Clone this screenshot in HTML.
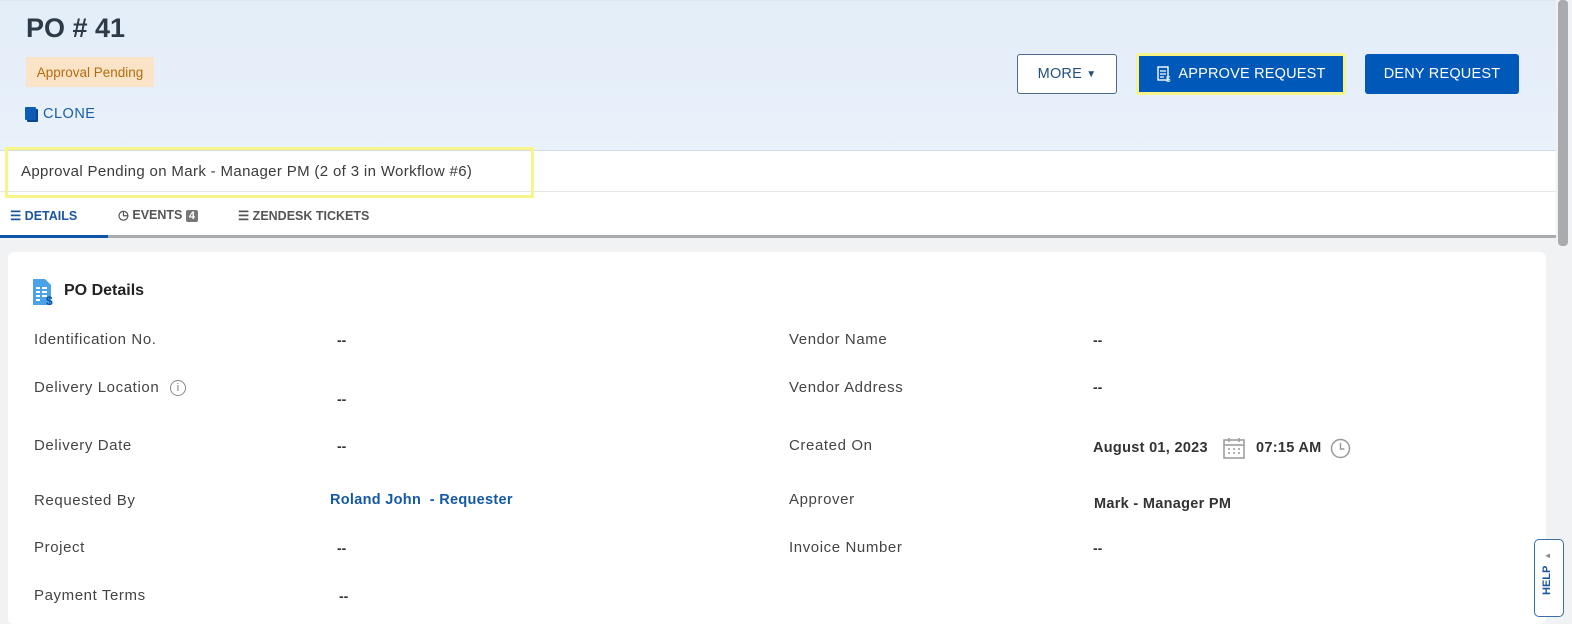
<!DOCTYPE html>
<html><head><meta charset="utf-8"><style>
*{margin:0;padding:0;box-sizing:border-box}
body{width:1572px;height:624px;overflow:hidden;background:#f1f2f4;font-family:"Liberation Sans",sans-serif;position:relative;color:#333}
.hdr{position:absolute;left:0;top:0;width:1556px;height:150px;background:linear-gradient(180deg,#e3edf8,#e9f1fa);border-top:1px solid #dfe5ee}
.abs{position:absolute}
.lbl{position:absolute;left:34px;font-size:15px;color:#444;letter-spacing:.6px;top:0}
.lbl2{position:absolute;left:789px;font-size:15px;color:#444;letter-spacing:.6px}
.val{position:absolute;font-size:14px;font-weight:bold;color:#333}
.btn{position:absolute;top:54px;height:40px;border-radius:3px;font-size:14.5px;display:flex;align-items:center;justify-content:center;letter-spacing:.2px}
</style></head><body>
<div class="hdr"></div>
<div class="abs" style="left:26px;top:13px;font-size:27px;font-weight:bold;color:#2f3a48">PO # 41</div>
<div class="abs" style="left:26px;top:57px;width:128px;height:30px;background:#fbe3c8;color:#b46d0c;font-size:13.5px;line-height:31px;text-align:center">Approval Pending</div>
<div class="abs" style="left:25px;top:107px;width:11px;height:13px;background:#0d5bb5;border-radius:1px;box-shadow:2px 2px 0 #0a4590"></div>
<div class="abs" style="left:43px;top:106px;font-size:14.5px;color:#1b5ea8;letter-spacing:.5px">CLONE</div>
<div class="btn" style="left:1017px;width:100px;background:#fff;border:1px solid #4b6a8c;color:#24507e">MORE&nbsp;<span style="font-size:10px">▼</span></div>
<div class="btn" style="left:1136px;width:210px;background:#0058b8;border:3px solid #f7f58a;color:#fff;top:53px;height:42px"><svg width="16" height="16" viewBox="0 0 16 16" style="margin-right:6px"><rect x="2" y="1" width="10" height="13" fill="none" stroke="#fff" stroke-width="1.4"/><path d="M4 5h6M4 8h6M4 11h4" stroke="#fff" stroke-width="1.2"/><text x="10" y="16" font-size="8" fill="#fff" font-family="Liberation Sans">$</text></svg>APPROVE REQUEST</div>
<div class="btn" style="left:1365px;width:154px;background:#0058b8;color:#fff">DENY REQUEST</div>
<div class="abs" style="left:0;top:150px;width:1556px;height:88px;background:#fff;border-top:1px solid #d5dbe3"></div>
<div class="abs" style="left:0;top:191px;width:1556px;height:1px;background:#e4e6ea"></div>
<div class="abs" style="left:5px;top:147px;width:529px;height:51px;border:3px solid #f7f58a"></div>
<div class="abs" style="left:21px;top:163px;font-size:15px;color:#3b3b3b;letter-spacing:.35px">Approval Pending on Mark - Manager PM (2 of 3 in Workflow #6)</div>
<div class="abs" style="left:10px;top:208px;font-size:12.5px;font-weight:bold;color:#1d56a0">☰ DETAILS</div>
<div class="abs" style="left:118px;top:207px;font-size:12.5px;font-weight:bold;color:#555">◷ EVENTS <span style="background:#777;color:#fff;border-radius:2px;padding:0 3px;font-size:11px">4</span></div>
<div class="abs" style="left:238px;top:208px;font-size:12.5px;font-weight:bold;color:#555">☰ ZENDESK TICKETS</div>
<div class="abs" style="left:0;top:235px;width:1556px;height:3px;background:#a9abae"></div>
<div class="abs" style="left:0;top:235px;width:108px;height:3px;background:#0d56a6"></div>
<div class="abs" style="left:1558px;top:0;width:10px;height:246px;background:#a9abae;border-radius:4px"></div>
<div class="abs" style="left:8px;top:252px;width:1538px;height:372px;background:#fff;border-radius:6px"></div>
<svg class="abs" style="left:33px;top:279px" width="22" height="26" viewBox="0 0 22 26"><path d="M0 0h12l6 6v20H0z" fill="#4aa3e6"/><path d="M3 9h4M9 9h5M3 13h4M9 13h5M3 17h4M9 17h5M3 21h4" stroke="#fff" stroke-width="2"/><text x="13" y="26" font-size="12" font-weight="bold" fill="#0d56a6" font-family="Liberation Sans">$</text></svg>
<div class="abs" style="left:64px;top:282px;font-size:16px;font-weight:bold;color:#222">PO Details</div>
<div class="lbl" style="top:331px">Identification No.</div>
<div class="lbl" style="top:379px">Delivery Location <span style="display:inline-block;width:16px;height:16px;border:1.3px solid #888;border-radius:50%;font-size:11px;text-align:center;line-height:14px;color:#777;margin-left:6px;vertical-align:middle;letter-spacing:0">i</span></div>
<div class="lbl" style="top:437px">Delivery Date</div>
<div class="lbl" style="top:492px">Requested By</div>
<div class="lbl" style="top:539px">Project</div>
<div class="lbl" style="top:587px">Payment Terms</div>
<div class="val" style="left:337px;top:332px">--</div>
<div class="val" style="left:337px;top:391px">--</div>
<div class="val" style="left:337px;top:438px">--</div>
<div class="val" style="left:330px;top:492px;color:#1559a6;font-size:14.5px;letter-spacing:.3px">Roland John &nbsp;- Requester</div>
<div class="val" style="left:337px;top:540px">--</div>
<div class="val" style="left:339px;top:588px">--</div>
<div class="lbl2" style="top:331px">Vendor Name</div>
<div class="lbl2" style="top:379px">Vendor Address</div>
<div class="lbl2" style="top:437px">Created On</div>
<div class="lbl2" style="top:491px">Approver</div>
<div class="lbl2" style="top:539px">Invoice Number</div>
<div class="val" style="left:1093px;top:332px">--</div>
<div class="val" style="left:1093px;top:379px">--</div>
<div class="val" style="left:1093px;top:440px;font-size:14.5px;letter-spacing:.3px">August 01, 2023</div>
<svg class="abs" style="left:1223px;top:437px" width="22" height="22" viewBox="0 0 22 22"><rect x="1" y="3" width="20" height="18" fill="none" stroke="#999" stroke-width="1.5"/><path d="M1 8h20M6 1v4M16 1v4" stroke="#999" stroke-width="1.5"/><path d="M5 12h2M10 12h2M15 12h2M5 16h2M10 16h2M15 16h2" stroke="#999" stroke-width="1.5"/></svg>
<div class="val" style="left:1256px;top:440px;font-size:14.5px;letter-spacing:.3px">07:15 AM</div>
<svg class="abs" style="left:1330px;top:438px" width="21" height="21" viewBox="0 0 21 21"><circle cx="10.5" cy="10.5" r="9" fill="none" stroke="#999" stroke-width="1.5"/><path d="M10.5 5v6h4" fill="none" stroke="#999" stroke-width="1.5"/></svg>
<div class="val" style="left:1094px;top:496px;font-size:14.5px;letter-spacing:.3px">Mark - Manager PM</div>
<div class="val" style="left:1093px;top:540px">--</div>
<div class="abs" style="left:1534px;top:539px;width:30px;height:78px;background:#fff;border:1.5px solid #3a6fa8;border-radius:5px"></div>
<div class="abs" style="left:1541px;top:595px;transform:rotate(-90deg);transform-origin:0 0;font-size:11px;font-weight:bold;color:#1d56a0;white-space:nowrap">HELP &nbsp;<span style="color:#888;font-size:8px">▲</span></div>
</body></html>
